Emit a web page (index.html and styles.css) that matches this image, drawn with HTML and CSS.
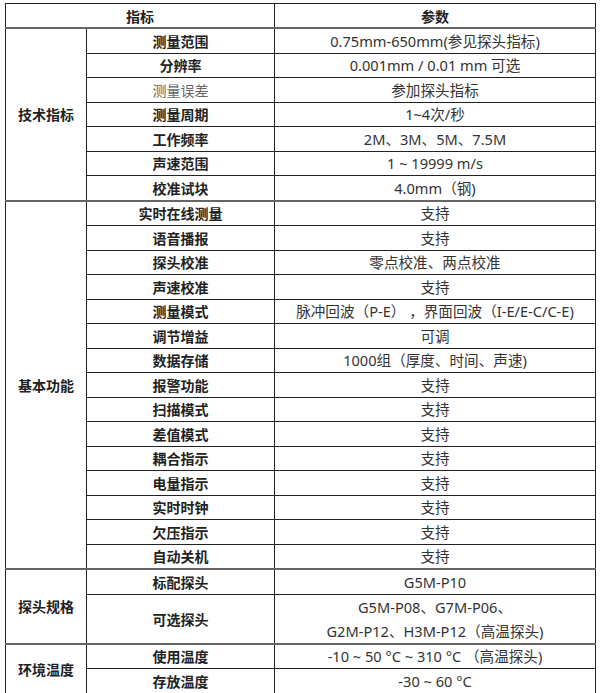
FILE: index.html
```html
<!DOCTYPE html>
<html lang="zh">
<head>
<meta charset="utf-8">
<title>参数表</title>
<link rel="stylesheet" href="styles.css">
</head>
<body>
<table class="spec">
  <colgroup>
    <col class="c1">
    <col class="c2">
    <col class="c3">
  </colgroup>
  <thead>
    <tr class="head"><th colspan="2" class="hd">指标</th><th class="hd">参数</th></tr>
  </thead>
  <tbody class="sec">
    <tr><td class="grp" rowspan="7">技术指标</td><td class="key">测量范围</td><td class="val">0.75mm-650mm(参见探头指标)</td></tr>
    <tr><td class="key">分辨率</td><td class="val">0.001mm / 0.01 mm 可选</td></tr>
    <tr><td class="key light">测量误差</td><td class="val">参加探头指标</td></tr>
    <tr><td class="key">测量周期</td><td class="val">1~4次/秒</td></tr>
    <tr><td class="key">工作频率</td><td class="val">2M、3M、5M、7.5M</td></tr>
    <tr><td class="key">声速范围</td><td class="val">1 ~ 19999 m/s</td></tr>
    <tr><td class="key">校准试块</td><td class="val">4.0mm（钢)</td></tr>
  </tbody>
  <tbody class="sec">
    <tr><td class="grp" rowspan="15">基本功能</td><td class="key">实时在线测量</td><td class="val">支持</td></tr>
    <tr><td class="key">语音播报</td><td class="val">支持</td></tr>
    <tr><td class="key">探头校准</td><td class="val">零点校准、两点校准</td></tr>
    <tr><td class="key">声速校准</td><td class="val">支持</td></tr>
    <tr><td class="key">测量模式</td><td class="val">脉冲回波（P-E） ，界面回波（I-E/E-C/C-E)</td></tr>
    <tr><td class="key">调节增益</td><td class="val">可调</td></tr>
    <tr><td class="key">数据存储</td><td class="val">1000组（厚度、时间、声速)</td></tr>
    <tr><td class="key">报警功能</td><td class="val">支持</td></tr>
    <tr><td class="key">扫描模式</td><td class="val">支持</td></tr>
    <tr><td class="key">差值模式</td><td class="val">支持</td></tr>
    <tr><td class="key">耦合指示</td><td class="val">支持</td></tr>
    <tr><td class="key">电量指示</td><td class="val">支持</td></tr>
    <tr><td class="key">实时时钟</td><td class="val">支持</td></tr>
    <tr><td class="key">欠压指示</td><td class="val">支持</td></tr>
    <tr><td class="key">自动关机</td><td class="val">支持</td></tr>
  </tbody>
  <tbody class="sec">
    <tr><td class="grp" rowspan="2">探头规格</td><td class="key">标配探头</td><td class="val">G5M-P10</td></tr>
    <tr class="dbl"><td class="key">可选探头</td><td class="val">G5M-P08、G7M-P06、<br>G2M-P12、H3M-P12（高温探头)</td></tr>
  </tbody>
  <tbody class="sec">
    <tr><td class="grp" rowspan="2">环境温度</td><td class="key">使用温度</td><td class="val">-10 ~ 50 °C ~ 310 °C （高温探头)</td></tr>
    <tr><td class="key">存放温度</td><td class="val">-30 ~ 60 °C</td></tr>
  </tbody>
</table>
</body>
</html>
```
FILE: styles.css
```css
html, body {
  background: #ffffff;
}
body {
  margin: 3px 0 0 5px;
  font-family: "Noto Sans CJK SC", "Noto Sans", sans-serif;
  font-size: 14px;
  color: #333333;
}
.spec {
  border-collapse: collapse;
  table-layout: fixed;
  width: 590px;
  border: 1px solid #111111;
}
.c1 { width: 81px; }
.c2 { width: 188px; }
.c3 { width: 321px; }
.spec th,
.spec td {
  padding: 0;
  text-align: center;
  vertical-align: middle;
  line-height: 18px;
  height: 23.5px;
  border: 1px solid #222222;
  white-space: nowrap;
}
.head th {
  height: 23px;
}
.hd {
  font-weight: bold;
  color: #222222;
}
.spec thead th {
  border-bottom: 2px solid #666666;
}
.sec {
  border-top: 2px solid #666666;
}
.grp {
  font-weight: bold;
  color: #222222;
  border-right: 2px solid #666666;
}
.key {
  font-weight: bold;
  color: #222222;
  border-right: 2px solid #666666;
}
.key.light {
  font-weight: normal;
  color: #666666;
}
.val {
  font-family: "Noto Sans", "Noto Sans CJK SC", sans-serif;
  font-size: 14.6px;
  color: #333333;
}
.dbl td {
  height: 46px;
}
.dbl .val {
  line-height: 24px;
}
```
